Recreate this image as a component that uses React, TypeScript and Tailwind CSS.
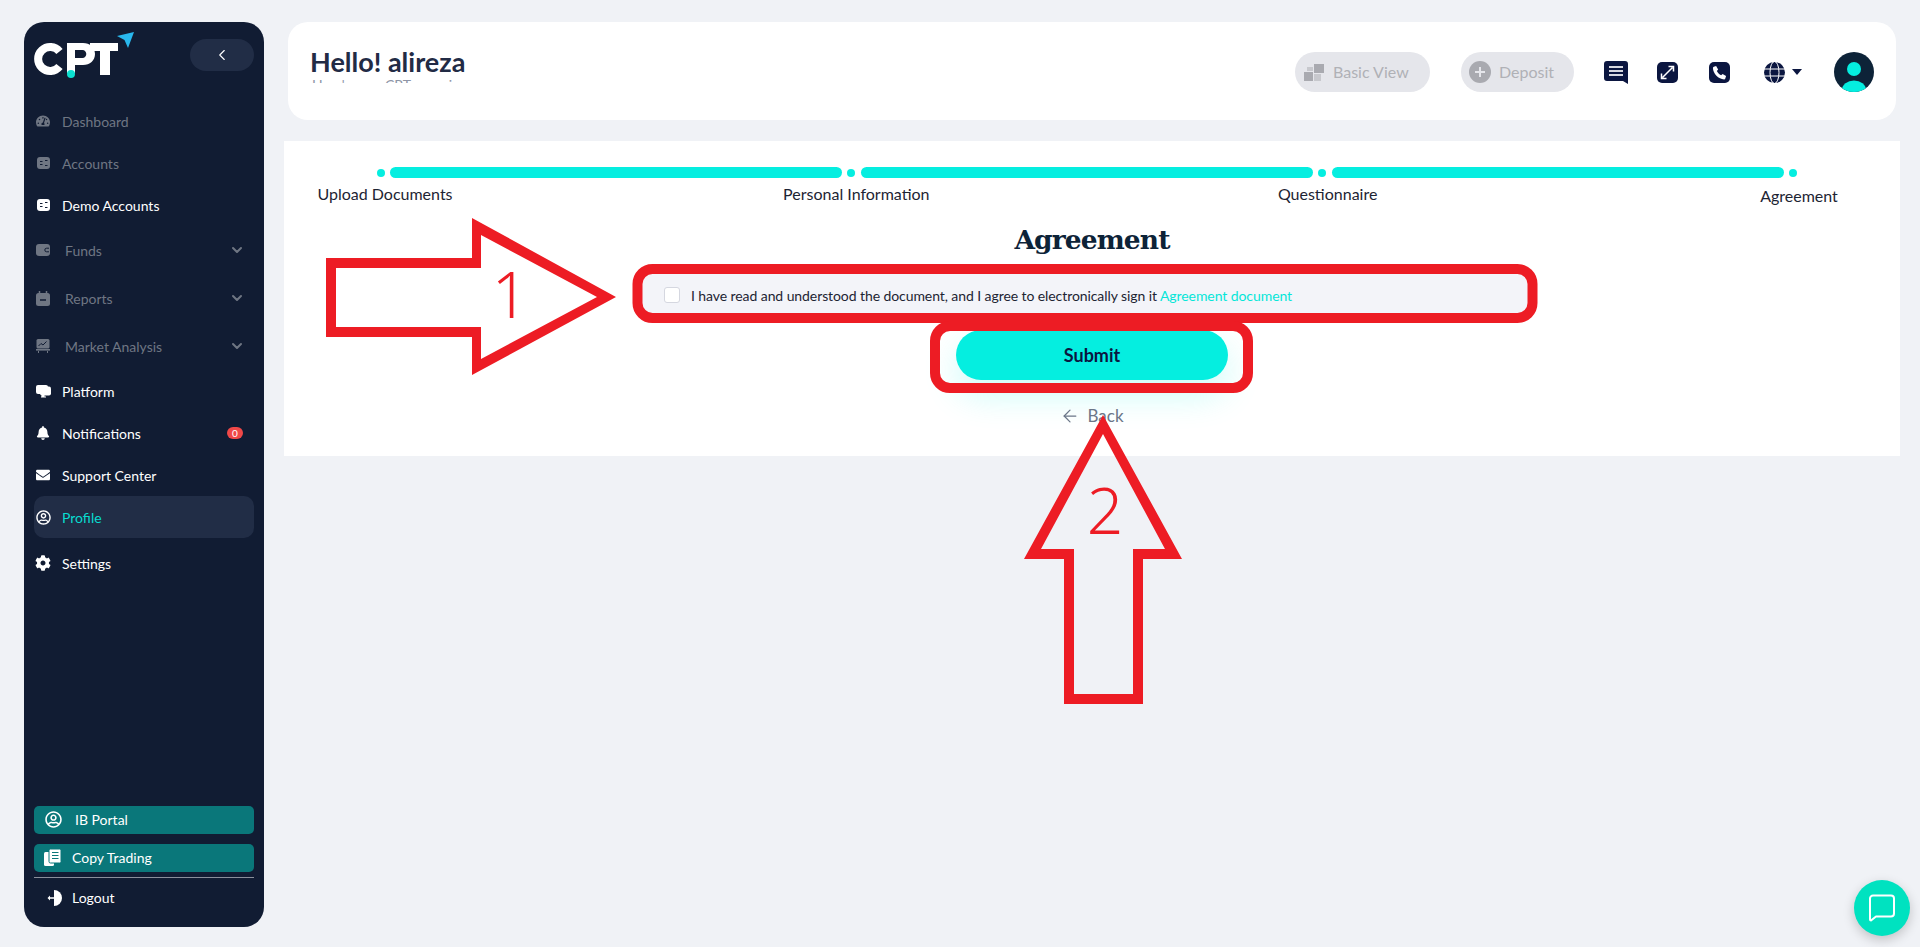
import { ArrowLeft, ChevronDown, ChevronLeft } from "lucide-react";
import { FaBell, FaCog, FaEnvelope, FaRegUserCircle, FaTachometerAlt } from "react-icons/fa";
import type { ReactNode } from "react";

const lato = "font-['Lato','Liberation_Sans',sans-serif]";

function AccountIcon() {
  return (
    <svg width="13" height="12" viewBox="0 0 13 12">
      <rect width="13" height="12" rx="3" fill="currentColor" />
      <path d="M3 4.500h2.500M8 3.500h2.500M3 7.500h2.500M8 8.500h2.500" stroke="#111c33" strokeWidth="1" />
    </svg>
  );
}

function WalletIcon() {
  return (
    <svg width="14" height="12" viewBox="0 0 14 12">
      <rect width="14" height="12" rx="3" fill="currentColor" />
      <path d="M13 4.200h-2.400a1.800 1.800 0 0 0 0 3.600H13" fill="none" stroke="#111c33" strokeWidth="1" />
    </svg>
  );
}

function ReportIcon() {
  return (
    <svg width="14" height="15" viewBox="0 0 14 15">
      <rect y="2" width="14" height="13" rx="2.500" fill="currentColor" />
      <path d="M3.500 0v3M10.500 0v3" stroke="currentColor" strokeWidth="1.500" />
      <path d="M4 9h6" stroke="#111c33" strokeWidth="1.500" />
    </svg>
  );
}

function MarketIcon() {
  return (
    <svg width="14" height="14" viewBox="0 0 14 14">
      <rect x="0.500" width="13" height="9.500" rx="1.500" fill="currentColor" />
      <rect y="10" width="14" height="1.600" fill="currentColor" />
      <path d="M2.500 12v2M11.500 12v2" stroke="currentColor" strokeWidth="1" />
      <path d="M2.500 7l2.500-2.500 2 1.500 3.500-3.500" fill="none" stroke="#111c33" strokeWidth="1" />
    </svg>
  );
}

function PlatformIcon() {
  return (
    <svg width="15" height="13" viewBox="0 0 15 13" fill="currentColor">
      <rect x="4" y="1.500" width="11" height="9" rx="2" />
      <rect y="0" width="12" height="9" rx="2" />
      <path d="M5.500 9h3v2.500h-3zM5 11.500h5v1H5z" />
    </svg>
  );
}

function NotebookIcon() {
  return (
    <svg width="17" height="17" viewBox="0 0 17 17" fill="currentColor">
      <rect x="0" y="3" width="10" height="14" rx="1.500" />
      <rect x="5" y="0" width="12" height="14" rx="1.500" stroke="#0a777a" strokeWidth="1" />
      <path d="M8 3.500h6.500M8 6.500h6.500M8 9.500h6.500" stroke="#0a777a" strokeWidth="1.200" />
    </svg>
  );
}

function LogoutIcon() {
  return (
    <svg width="15" height="16" viewBox="0 0 15 16" fill="white">
      <path d="M7 0a8 8 0 0 1 0 16Z" />
      <path d="M0.500 8l2.500-2.400v1.700h6.500v1.400H3v1.700Z" />
    </svg>
  );
}

function Logo() {
  return (
    <svg width="102" height="46" viewBox="0 0 102 46">
      <path d="M25.500 19.500A12 12 0 1 0 25.500 34.500" fill="none" stroke="white" strokeWidth="8" />
      <path d="M33 11h16c7 0 12 4.600 12 11s-5 11-12 11h-8v8h-8Zm8 7v8h7.500c2.200 0 3.800-1.700 3.800-4s-1.600-4-3.800-4Z" fill="white" fillRule="evenodd" />
      <path d="M56 11h28v8H76v24H66V19H56Z" fill="white" />
      <circle cx="37" cy="42" r="4" fill="#0be0d0" />
      <path d="M83 4 100 0l-6 16-3.500-8Z" fill="#29b8ee" />
    </svg>
  );
}

function NavItem({
  icon,
  label,
  tone = "white",
  chevron,
  badge,
  gap,
  height,
}: {
  icon: ReactNode;
  label: string;
  tone?: "white" | "gray" | "active";
  chevron?: boolean;
  badge?: string;
  gap?: boolean;
  height: string;
}) {
  const color =
    tone === "gray" ? "text-[#6f7683]" : tone === "active" ? "text-white bg-[#212d46] rounded-[10px]" : "text-white";
  return (
    <div className={`flex items-center ${height} px-[1px] ${color}`}>
      <span className="w-[16px] flex justify-center shrink-0">{icon}</span>
      <span
        className={`text-[14px] ${gap ? "ml-[14px]" : "ml-[11px]"} flex-1 ${tone === "active" ? "text-[#08dcd0]" : ""}`}
      >
        {label}
      </span>
      {chevron && <ChevronDown size={16} strokeWidth={3} className="mr-[8px] text-[#6f7683]" />}
      {badge && (
        <span className="mr-[10px] w-[16px] h-[12px] rounded-full bg-[#f04848] text-white text-[10px] leading-[12px] text-center">
          {badge}
        </span>
      )}
    </div>
  );
}

function Sidebar() {
  return (
    <aside className="w-[240px] h-[905px] mt-[22px] ml-[24px] shrink-0 rounded-[20px] bg-[#111c33] px-[10px] flex flex-col">
      <div className="flex items-start justify-between h-[78px] pt-[10px]">
        <Logo />
        <button className="w-[64px] h-[32px] mt-[7px] rounded-full bg-[#212d46] flex items-center justify-center text-white">
          <ChevronLeft size={18} strokeWidth={1.5} />
        </button>
      </div>
      <NavItem height="h-[42px]" tone="gray" icon={<FaTachometerAlt size={14} />} label="Dashboard" />
      <NavItem height="h-[42px]" tone="gray" icon={<AccountIcon />} label="Accounts" />
      <NavItem height="h-[42px]" icon={<AccountIcon />} label="Demo Accounts" />
      <NavItem height="h-[48px]" tone="gray" gap chevron icon={<WalletIcon />} label="Funds" />
      <NavItem height="h-[48px]" tone="gray" gap chevron icon={<ReportIcon />} label="Reports" />
      <NavItem height="h-[48px]" tone="gray" gap chevron icon={<MarketIcon />} label="Market Analysis" />
      <NavItem height="h-[42px]" icon={<PlatformIcon />} label="Platform" />
      <NavItem height="h-[42px]" icon={<FaBell size={14} />} badge="0" label="Notifications" />
      <NavItem height="h-[42px]" icon={<FaEnvelope size={14} />} label="Support Center" />
      <NavItem height="h-[42px]" tone="active" icon={<FaRegUserCircle size={15} />} label="Profile" />
      <NavItem height="h-[50px]" icon={<FaCog size={16} />} label="Settings" />

      <div className="mt-auto flex flex-col text-white text-[14px]">
        <div className="h-[28px] rounded-[5px] bg-[#0a777a] flex items-center pl-[11px] pb-[1px]">
          <FaRegUserCircle size={17} />
          <span className="ml-[13px]">IB Portal</span>
        </div>
        <div className="h-[28px] mt-[10px] rounded-[5px] bg-[#0a777a] flex items-center pl-[10px] pb-[1px]">
          <NotebookIcon />
          <span className="ml-[11px]">Copy Trading</span>
        </div>
        <div className="h-px mt-[5px] bg-[#8a8f9b]" />
        <div className="h-[39px] mb-[10px] flex items-center pl-[13px]">
          <LogoutIcon />
          <span className="ml-[10px]">Logout</span>
        </div>
      </div>
    </aside>
  );
}

function HeaderIconBox({ children, w }: { children: ReactNode; w: string }) {
  return <div className={`${w} h-[21px] rounded-[5px] bg-[#0b1640] flex items-center justify-center`}>{children}</div>;
}

function Header() {
  return (
    <header className="h-[98px] mx-[4px] rounded-[20px] bg-white flex items-start justify-between pl-[22px] pr-[22px]">
      <div className="pt-[23px]">
        <h1 className="text-[27px] leading-[34px] font-bold text-[#222b45]">Hello! alireza</h1>
        <div className="h-[3px] ml-[2px] mt-[1px] overflow-hidden">
          <p className="text-[14px] leading-[14px] -mt-[2px] text-[#8e95a6]">Here's your CPT overview</p>
        </div>
      </div>
      <div className="flex items-center pt-[30px]">
        <div className="w-[135px] h-[40px] rounded-full bg-[#e5e6eb] flex items-center pl-[9px] text-[16px] text-[#b0b1b6]">
          <svg width="20" height="17" viewBox="0 0 20 17" fill="#a9aab0">
            <rect x="10" y="0" width="10" height="9" />
            <rect x="0" y="8" width="9" height="9" />
            <rect x="10" y="10" width="7" height="7" opacity="0.5" />
            <rect x="3" y="3" width="6" height="4" opacity="0.5" />
          </svg>
          <span className="ml-[9px]">Basic View</span>
        </div>
        <div className="w-[113px] h-[40px] ml-[31px] rounded-full bg-[#e5e6eb] flex items-center pl-[8px] text-[16px] text-[#b0b1b6]">
          <span className="w-[22px] h-[22px] rounded-full bg-[#a9aab0] flex items-center justify-center">
            <svg width="12" height="12" viewBox="0 0 12 12" stroke="#e5e6eb" strokeWidth="2">
              <path d="M6 1v10M1 6h10" />
            </svg>
          </span>
          <span className="ml-[8px]">Deposit</span>
        </div>
        <svg className="ml-[30px]" width="24" height="23" viewBox="0 0 24 23">
          <path d="M3 0h18a3 3 0 0 1 3 3v20l-5-3H3a3 3 0 0 1-3-3V3a3 3 0 0 1 3-3Z" fill="#0b1640" />
          <path d="M5 6h14M5 10h14M5 14h14" stroke="#d8d9e0" strokeWidth="1.800" />
        </svg>
        <div className="ml-[29px]">
          <HeaderIconBox w="w-[21px]">
            <svg width="15" height="15" viewBox="0 0 15 15" fill="none" stroke="white" strokeWidth="1.500">
              <path d="M2.500 12.500 12.500 2.500M8.500 1.500h5v5M6.500 13.500h-5v-5" />
            </svg>
          </HeaderIconBox>
        </div>
        <div className="ml-[31px]">
          <HeaderIconBox w="w-[21px]">
            <svg width="15" height="15" viewBox="0 0 24 24" fill="white">
              <path d="M6.600 1.500 9.800 7 7.800 9.400c1.300 3 3.800 5.500 6.800 6.800l2.400-2 5.500 3.200-1.200 4.200c-.3.900-1.100 1.400-2 1.400C10.500 22.500 1.500 13.500 1.500 4.700c0-.9.500-1.700 1.400-2Z" />
            </svg>
          </HeaderIconBox>
        </div>
        <svg className="ml-[34px]" width="21" height="21" viewBox="0 0 21 21" fill="none" stroke="white" strokeWidth="1">
          <circle cx="10.500" cy="10.500" r="10.500" fill="#0b1640" stroke="none" />
          <ellipse cx="10.500" cy="10.500" rx="4.500" ry="11" />
          <path d="M0 7h21M0 14h21" />
        </svg>
        <svg className="ml-[7px]" width="10" height="6" viewBox="0 0 10 6" fill="#0b1640">
          <path d="M0 0h10L5 6Z" />
        </svg>
        <svg className="ml-[32px]" width="40" height="40" viewBox="0 0 40 40">
          <defs>
            <clipPath id="avatar-clip">
              <circle cx="20" cy="20" r="20" />
            </clipPath>
          </defs>
          <circle cx="20" cy="20" r="20" fill="#0d2338" />
          <g clipPath="url(#avatar-clip)" fill="#05eee0">
            <circle cx="20" cy="17" r="7" />
            <ellipse cx="20" cy="38" rx="12" ry="9.500" />
          </g>
        </svg>
      </div>
    </header>
  );
}

function Stepper() {
  return (
    <div className="pt-[26px]">
      <div className="flex items-center ml-[93px]">
        <span className="w-[8px] h-[8px] mr-[5px] rounded-full bg-[#05eee0]" />
        {[0, 1, 2].map(i => (
          <div key={i} className="flex items-center">
            <span className="w-[452px] h-[11px] rounded-full bg-[#05eee0]" />
            <span className="w-[8px] h-[8px] mx-[5px] rounded-full bg-[#05eee0]" />
            <span className="w-px" />
          </div>
        ))}
      </div>
      <div className="flex justify-between w-[1614px] ml-[1px] mt-[6px] text-[16px] leading-[20px] text-[#1d2433]">
        <span className="w-[200px] text-center">Upload Documents</span>
        <span className="w-[200px] text-center">Personal Information</span>
        <span className="w-[200px] text-center">Questionnaire</span>
        <span className="w-[200px] text-center mt-[2px]">Agreement</span>
      </div>
    </div>
  );
}

function AgreementForm() {
  return (
    <div className="flex flex-col items-center">
      <h2 className="mt-[14px] text-[26.5px] leading-[40px] font-bold text-[#0d2338] font-['DejaVu_Serif',serif] tracking-[-0.9px]">
        Agreement
      </h2>
      <div className="mt-[13px] self-start ml-[358px] w-[890px] h-[44px] rounded-[6px] bg-[#f3f4f9] flex items-center pl-[22px] text-[14px] tracking-[-0.08px] text-[#1d2433]">
        <span className="w-[16px] h-[16px] rounded-[3px] border border-[#d5d7e0] bg-white" />
        <span className="ml-[11px]">
          I have read and understood the document, and I agree to electronically sign it{" "}
          <span className="text-[#05e6d8]">Agreement document</span>
        </span>
      </div>
      <button className="mt-[13px] w-[272px] h-[50px] rounded-full bg-[#05eee0] text-[18px] font-bold text-[#0b1640] shadow-[0_15px_35px_rgba(5,238,224,0.2)]">
        Submit
      </button>
      <div className="mt-[24px] flex items-center text-[17px] leading-[24px] text-[#6b7688]">
        <ArrowLeft size={20} strokeWidth={1.5} />
        <span className="ml-[7px]">Back</span>
      </div>
    </div>
  );
}

// red marks drawn on top of the screenshot
function Annotations() {
  return (
    <svg className="absolute left-0 top-0 pointer-events-none" width="1920" height="947" viewBox="0 0 1920 947">
      <g fill="#ed1c24" fillRule="evenodd">
        <path d="M326 258H472V218L616 297 472 375V337H326ZM336 268V327H481V359L597 297 481 235V268Z" />
        <path d="M1103 415 1182 559H1143V704H1064V559H1024ZM1103 434 1041 549H1074V694H1133V549H1165Z" />
      </g>
      <rect x="637.500" y="269" width="895" height="49" rx="15" fill="none" stroke="#ed1c24" strokeWidth="10" />
      <rect x="935" y="326" width="313" height="62" rx="15" fill="none" stroke="#ed1c24" strokeWidth="10" />
      <text x="510" y="318" textAnchor="middle" fontSize="64" fontWeight="300" fill="#ed1c24" fontFamily="'Noto Sans', sans-serif">
        1
      </text>
      <text x="1105" y="534" textAnchor="middle" fontSize="64" fontWeight="300" fill="#ed1c24" fontFamily="'Noto Sans', sans-serif">
        2
      </text>
    </svg>
  );
}

export default function App() {
  return (
    <div className={`relative flex w-[1920px] h-[947px] overflow-hidden bg-[#f0f2f6] ${lato}`}>
      <Sidebar />
      <main className="flex-1 ml-[20px] mr-[20px] pt-[22px]">
        <Header />
        <section className="mt-[21px] h-[315px] bg-white">
          <Stepper />
          <AgreementForm />
        </section>
      </main>
      <Annotations />
      <button className="absolute right-[10px] bottom-[11px] w-[56px] h-[56px] rounded-full bg-[#00e2c0] shadow-[0_4px_12px_rgba(0,0,0,0.2)] flex items-center justify-center">
        <svg width="28" height="28" viewBox="0 0 28 28" fill="none" stroke="white" strokeWidth="2" strokeLinejoin="round">
          <path d="M5 1.500h18a3 3 0 0 1 3 3v15a3 3 0 0 1-3 3H8l-5 4a1 1 0 0 1-1-1V4.500a3 3 0 0 1 3-3Z" />
        </svg>
      </button>
    </div>
  );
}
